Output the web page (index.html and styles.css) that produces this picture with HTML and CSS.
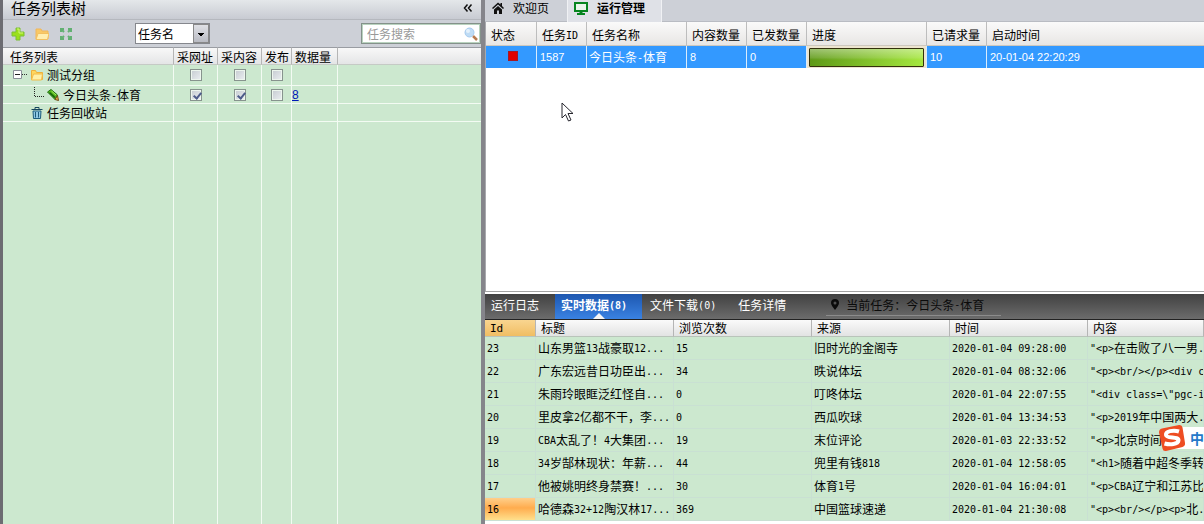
FILE: index.html
```html
<!DOCTYPE html>
<html lang="zh-CN">
<head>
<meta charset="utf-8">
<title>任务列表树</title>
<link rel="stylesheet" href="styles.css">
</head>
<body>
<div class="app">
  <aside class="sidebar">
    <header class="panel-title">
      <h1>任务列表树</h1>
      <button class="collapse" aria-label="收起">
        <svg width="10" height="8" viewBox="0 0 10 8"><path d="M4.500 0.500 1.500 4l3 3.500M8.500 0.500 5.500 4l3 3.500" fill="none" stroke="#111" stroke-width="1.500"/></svg>
      </button>
    </header>
    <div class="toolbar">
      <button aria-label="新建任务"><svg width="14" height="14" viewBox="0 0 14 14"><path d="M5 1h4v4h4v4H9v4H5V9H1V5h4z" fill="#9be01c" stroke="#7cc035"/><path d="M6 2h2v4h4" fill="none" stroke="#d5f77a"/></svg></button>
      <button aria-label="新建分组"><svg width="14" height="14" viewBox="0 0 14 14"><path d="M1 12V2h5l1 2h6v8z" fill="#f9c866" stroke="#f0b75a"/><path d="M1 12.500 3 6.500h11l-1.500 6z" fill="#ffeeb0" stroke="#f3c060"/></svg></button>
      <button aria-label="展开全部"><svg width="14" height="14" viewBox="0 0 14 14"><path d="M2 5V2h3M9 2h3v3M12 9v3H9M5 12H2V9M2 2l3 3M12 2 9 5M12 12 9 9M2 12l3-3" fill="none" stroke="#62b072" stroke-width="2"/></svg></button>
      <select class="field" aria-label="搜索字段"><option>任务名</option></select>
      <label class="search"><input type="text" placeholder="任务搜索" aria-label="任务搜索">
        <svg width="14" height="14" viewBox="0 0 14 14"><path d="m9 9 4 4" stroke="#b77a50" stroke-width="2.500"/><circle cx="5.500" cy="5.500" r="4.500" fill="#bfdcf5" stroke="#a5caee"/><circle cx="4" cy="4" r="2" fill="#e4f1fc"/></svg>
      </label>
    </div>
    <table class="tree">
      <colgroup><col class="w-name"><col class="w-check"><col class="w-check"><col class="w-pub"><col class="w-count"><col></colgroup>
      <thead><tr><th>任务列表</th><th>采网址</th><th>采内容</th><th>发布</th><th>数据量</th><th></th></tr></thead>
      <tbody>
        <tr class="group">
          <td><div class="node"><svg width="20" height="14" viewBox="0 0 20 14"><path d="M3.500 2.500h8v8h-8z" fill="#fff" stroke="#8a8f98"/><path d="M5 6.500h5" stroke="#222"/><path d="M12 6.500h6" stroke="#333" stroke-dasharray="1 1"/></svg><svg class="ico" width="12" height="12" viewBox="0 0 12 12"><path d="M.5 10.500v-9h4l1 2h6v7z" fill="#ffd75e" stroke="#eeb03c"/><path d="m.5 11 2-6h9l-1 6z" fill="#fff0a8" stroke="#f2bb48"/></svg><span>测试分组</span></div></td>
          <td class="mid"><input type="checkbox" aria-label="测试分组 采网址"></td><td class="mid"><input type="checkbox" aria-label="测试分组 采内容"></td><td class="mid"><input type="checkbox" aria-label="测试分组 发布"></td><td></td><td></td>
        </tr>
        <tr>
          <td><div class="node"><svg width="36" height="16" viewBox="0 0 36 16"><path d="M24.500 0v9M25 9.500h10" fill="none" stroke="#222" stroke-dasharray="1 1"/></svg><svg class="ico" width="12" height="12" viewBox="0 0 12 12"><path d="M.5 3 4 .5 10.500 6 8 10.500z" fill="#55b81c" stroke="#1f7010"/><path d="m2.500 3.500 5.500 5" stroke="#15600a" stroke-width="1.500"/><path d="m4.500 2 4.500 4" stroke="#a5e860"/><path d="m10.500 6.500 1 5-3.500-1z" fill="#f4b44c" stroke="#6b4617"/></svg><span>今日头条<i>-</i>体育</span></div></td>
          <td class="mid"><input type="checkbox" checked aria-label="今日头条 采网址"></td><td class="mid"><input type="checkbox" checked aria-label="今日头条 采内容"></td><td class="mid"><input type="checkbox" aria-label="今日头条 发布"></td><td class="num"><a href="#data">8</a></td><td></td>
        </tr>
        <tr>
          <td><div class="node"><svg width="20" height="14"></svg><svg class="ico" width="12" height="12" viewBox="0 0 12 12"><path d="M.5 2.500h11M4 2V.5h4V2" fill="none" stroke="#16465e"/><path d="M2 4h8l-.5 7.500h-7z" fill="#8fc9e4" stroke="#1c5c7c"/><path d="M4.500 5v5.500M7.500 5v5.500" stroke="#1c5c7c"/></svg><span>任务回收站</span></div></td>
          <td></td><td></td><td></td><td></td><td></td>
        </tr>
        <tr class="rest"><td></td><td></td><td></td><td></td><td></td><td></td></tr>
      </tbody>
    </table>
  </aside>

  <main class="main">
    <nav class="tabs">
      <button class="tab"><svg width="12" height="12" viewBox="0 0 12 12"><path d="M6 .5 0 6l1 1 5-4.500L11 7l1-1-2-2V1H8.500v1.500z" fill="#111"/><path d="M2 7.500 6 4l4 3.500V12H7V8.500H5V12H2z" fill="#111"/></svg>欢迎页</button>
      <button class="tab current"><svg width="14" height="13" viewBox="0 0 14 13"><path d="M1 1h12v8H1z" fill="#eaf5ea" stroke="#07851f" stroke-width="2"/><path d="M5.500 9h3v2H11v2H3v-2h2.500z" fill="#07851f"/></svg>运行管理</button>
    </nav>
    <section class="runs">
      <table class="run-table">
        <colgroup><col class="r1"><col class="r2"><col class="r3"><col class="r4"><col class="r4"><col class="r5"><col class="r4"><col></colgroup>
        <thead><tr><th>状态</th><th>任务<i>ID</i></th><th>任务名称</th><th>内容数量</th><th>已发数量</th><th>进度</th><th>已请求量</th><th>启动时间</th></tr></thead>
        <tbody><tr><td class="state"><span class="stopped"></span></td><td>1587</td><td class="cjk">今日头条<i>-</i>体育</td><td>8</td><td>0</td><td class="progress"><div class="bar"></div></td><td>10</td><td>20-01-04 22:20:29</td></tr></tbody>
      </table>
    </section>
    <section class="detail">
      <nav class="detail-tabs">
        <button>运行日志</button>
        <button class="current">实时数据<i>(8)</i></button>
        <button>文件下载<i>(0)</i></button>
        <button>任务详情</button>
        <p class="now"><svg width="8" height="11" viewBox="0 0 8 11"><path fill-rule="evenodd" d="M4 0a4 4 0 0 1 4 4c0 2-2 4-4 7C2 8 0 6 0 4a4 4 0 0 1 4-4zm0 2.500a1.500 1.500 0 1 0 0 3 1.500 1.500 0 0 0 0-3z" fill="#0b0b0b"/></svg>当前任务：今日头条<i>-</i>体育</p>
      </nav>
      <table class="data" id="data">
        <colgroup><col class="d1"><col class="d2"><col class="d2"><col class="d2"><col class="d2"><col></colgroup>
        <thead><tr><th class="sorted"><i>Id</i></th><th>标题</th><th>浏览次数</th><th>来源</th><th>时间</th><th>内容</th></tr></thead>
        <tbody>
          <tr><td><i>23</i></td><td>山东男篮<i>13</i>战豪取<i>12...</i></td><td><i>15</i></td><td>旧时光的金阁寺</td><td><i>2020-01-04 09:28:00</i></td><td><i>"&lt;p&gt;</i>在击败了八一男<i>.</i></td></tr>
          <tr><td><i>22</i></td><td>广东宏远昔日功臣出<i>...</i></td><td><i>34</i></td><td>昳说体坛</td><td><i>2020-01-04 08:32:06</i></td><td><i>"&lt;p&gt;&lt;br/&gt;&lt;/p&gt;&lt;div c</i></td></tr>
          <tr><td><i>21</i></td><td>朱雨玲眼眶泛红怪自<i>...</i></td><td><i>0</i></td><td>叮咚体坛</td><td><i>2020-01-04 22:07:55</i></td><td><i>"&lt;div class=\"pgc-i</i></td></tr>
          <tr><td><i>20</i></td><td>里皮拿<i>2</i>亿都不干，李<i>...</i></td><td><i>0</i></td><td>西瓜吹球</td><td><i>2020-01-04 13:34:53</i></td><td><i>"&lt;p&gt;2019</i>年中国两大<i>.</i></td></tr>
          <tr><td><i>19</i></td><td><i>CBA</i>太乱了！<i>4</i>大集团<i>...</i></td><td><i>19</i></td><td>末位评论</td><td><i>2020-01-03 22:33:52</i></td><td><i>"&lt;p&gt;</i>北京时间</td></tr>
          <tr><td><i>18</i></td><td><i>34</i>岁郜林现状：年薪<i>...</i></td><td><i>44</i></td><td>兜里有钱<i>818</i></td><td><i>2020-01-04 12:58:05</i></td><td><i>"&lt;h1&gt;</i>随着中超冬季转</td></tr>
          <tr><td><i>17</i></td><td>他被姚明终身禁赛！<i>...</i></td><td><i>30</i></td><td>体育<i>1</i>号</td><td><i>2020-01-04 16:04:01</i></td><td><i>"&lt;p&gt;CBA</i>辽宁和江苏比</td></tr>
          <tr><td class="active"><i>16</i></td><td>哈德森<i>32+12</i>陶汉林<i>17...</i></td><td><i>369</i></td><td>中国篮球速递</td><td><i>2020-01-04 21:30:08</i></td><td><i>"&lt;p&gt;&lt;br/&gt;&lt;/p&gt;&lt;p&gt;</i>北<i>.</i></td></tr>
        </tbody>
      </table>
    </section>
  </main>
</div>
<svg class="pointer" width="14" height="21" viewBox="0 0 14 21"><path d="M1 1v15l3.500-3.500L7.500 19l2.500-1-3-6.500h5z" fill="#fff" stroke="#26262e"/></svg>
<div class="ime"><svg width="26" height="28" viewBox="0 0 26 28"><path d="M3 4.500 20 1q3-.5 3.500 2.500L26 19q.5 3-2.500 4L7 27q-3 .5-3.500-2.500L0 8.500Q0 5 3 4.500z" fill="#ee4d22"/><path d="M20 7.500C14 5.500 6.500 7.500 7 11c.5 4 13 1 12.500 5.500C19 20.500 11 21 5.500 19.500" fill="none" stroke="#fff" stroke-width="4"/></svg><span>中</span></div>
</body>
</html>
```

FILE: styles.css
```css
* { box-sizing: border-box; }
body { margin: 0; overflow: hidden; background: #fff; color: #000; font: 12px/16px "Noto Sans CJK SC", sans-serif; }
i { font: 10px/12px "DejaVu Sans Mono", monospace; vertical-align: 1px; }
button { padding: 0; border: 0; background: none; color: inherit; font: inherit; }
button svg { display: block; }
table { width: 100%; border-collapse: separate; border-spacing: 0; table-layout: fixed; }
th, td { padding: 0; overflow: hidden; white-space: nowrap; text-align: left; font-weight: normal; }

.app { display: grid; grid-template-columns: 485px minmax(0, 1fr); height: 100vh; }
.sidebar { display: flex; flex-direction: column; min-height: 0; border-left: 3px solid #6c6c72; border-right: 4px solid #85858b; background: #cdd0d7; }
.panel-title { display: flex; justify-content: space-between; align-items: center; height: 20px; padding: 0 8px 4px; border-bottom: 1px solid #b5b8be; background: linear-gradient(#e4e7ea, #c8cbd2); }
.panel-title h1 { margin: 0; font-size: 15px; line-height: 15px; font-weight: normal; }
.toolbar { display: flex; align-items: center; gap: 10px; height: 27px; padding-left: 8px; }
.field { appearance: none; width: 75px; height: 21px; margin-left: 52px; padding: 0 2px; border: 1px solid #85878d; border-radius: 0; color: #000; font: inherit;
  background:
    linear-gradient(#000, #000) 62px 9px / 6px 1px no-repeat,
    linear-gradient(#000, #000) 63px 10px / 4px 1px no-repeat,
    linear-gradient(#000, #000) 64px 11px / 2px 1px no-repeat,
    linear-gradient(#dfe0e5, #b9bbc3) 58px 1px / 14px 17px no-repeat,
    linear-gradient(#888, #888) 57px 0 / 16px 19px no-repeat, #fff; }
.search { display: flex; align-items: center; width: 120px; height: 21px; margin-left: auto; padding: 0 2px; border: 1px solid #84918a; outline: 1px solid #b9d3bf; outline-offset: -2px; background: #fff; }
.search input { flex: 1; min-width: 0; padding: 0 0 0 3px; border: 0; outline: 0; background: none; font: inherit; }
.search input::placeholder { color: #999; }

.tree { flex: 1; min-height: 0; background: #cce8cf; }
.w-name { width: 171px; } .w-check { width: 44px; } .w-pub { width: 30px; } .w-count { width: 46px; }
.tree th { height: 18px; padding-left: 3px; border-right: 1px solid #b5b5b5; border-top: 1px solid #999ca2; border-bottom: 1px solid #c5cac5; background: linear-gradient(#f8f8f8, #e4e5e6); line-height: 15px; }
.tree th:first-child { padding-left: 7px; }
.tree th:last-child { border-right: 0; }
.tree td { height: 18px; border-right: 1px solid #f3fbf3; border-bottom: 1px solid #f3fbf3; }
.tree td:last-child { border-right: 0; }
.tree .group td { height: 21px; }
.tree .rest td { height: auto; border-bottom: 0; }
.tree .mid { text-align: center; line-height: 12px; }
.node { display: flex; align-items: center; height: 16px; padding-left: 7px; }
.node .ico { margin: 0 4px 0 1px; }
.num { font: 12px/16px "Liberation Sans", sans-serif; }
.num a { color: #0018b8; }
input[type="checkbox"] { appearance: none; display: block; position: relative; width: 12px; height: 12px; margin: 0 auto; border: 1px solid #87938e; outline: 1px solid #edf6ee; outline-offset: -2px; background: linear-gradient(135deg, #c5cbd0, #eceff2); }
input[type="checkbox"]:checked::after { content: ""; position: absolute; left: 4px; top: 1px; width: 3px; height: 6px; border: solid #4d5c8a; border-width: 0 2px 2px 0; transform: rotate(40deg); }

.main { display: flex; flex-direction: column; min-width: 0; }
.tabs { display: flex; height: 22px; background: #cdd0d7; border-bottom: 1px solid #b9bcc3; }
.tab { display: flex; align-items: center; gap: 9px; width: 82px; height: 16px; padding-left: 7px; }
.tab.current { width: 95px; height: 22px; padding: 0 0 6px 6px; border: solid #f0f1f4; border-width: 0 1px; background: #dfe1e7; font-weight: bold; }
.runs { flex: 1; min-height: 0; border-bottom: 1px solid #a3a3a3; border-left: 1px solid #a8a9ad; background: #fff; }
.r1 { width: 51px; } .r2 { width: 50px; } .r3 { width: 100px; } .r4 { width: 60px; } .r5 { width: 120px; }
.run-table th { height: 24px; padding: 2px 0 0 5px; border-right: 1px solid #bdbdbd; border-bottom: 1px solid #cdc8bf; background: linear-gradient(#fafafa, #e8e6e4); }
.run-table td { height: 22px; padding-left: 3px; border-right: 1px solid #d9ebfc; background: #3399ff; color: #fff; font: 11px/16px "Liberation Sans", sans-serif; }
.run-table tr > :last-child { border-right: 0; }
.run-table .cjk { padding-left: 2px; font: 12px/16px "Noto Sans CJK SC", sans-serif; }
.run-table .state { text-align: center; }
.stopped { display: inline-block; width: 10px; height: 10px; border: 1px solid #a31a26; background: #e00000; }
.run-table .progress { padding: 0 2px; background: #ede4cf; }
.bar { height: 19px; border: 1px solid #33300c; border-radius: 1px; background: linear-gradient(rgba(255,255,255,.4), rgba(255,255,255,.15) 50%, transparent 65%), linear-gradient(100deg, #5c9714, #a6e83e); }

.detail { margin-top: 2px; padding-bottom: 3px; }
.detail-tabs { display: flex; height: 26px; background: linear-gradient(#414141, #6c6c6c); border-bottom: 1px solid #222; color: #fff; }
.detail-tabs button { padding: 0 6px 3px; }
.detail-tabs .current { position: relative; margin: 0 2px 0 10px; padding: 0 15px 3px 6px; background: linear-gradient(#1d57b0, #3a82e2); font-weight: bold; }
.detail-tabs .current i { font-weight: bold; }
.detail-tabs .current::after { content: ""; position: absolute; left: 50%; bottom: 0; margin-left: -6px; border: 6px solid transparent; border-top: 0; border-bottom-color: #f5f5f5; }
.detail-tabs button:nth-of-type(4) { margin-left: 10px; }
.detail-tabs .now { display: flex; align-items: center; height: 22px; margin: 0 0 0 34px; padding: 0 17px 0 5px; border-bottom: 1px solid #8c8c8c; color: #0b0b0b; }
.now svg { margin-right: 7px; }
.d1 { width: 51px; } .d2 { width: 138px; }
.data { background: #cce8cf; }
.data th { height: 17px; padding-left: 5px; border-right: 1px solid #b5b5b5; border-bottom: 1px solid #b9c4ba; background: linear-gradient(#fafafa, #e2e3e3); line-height: 16px; }
.data .sorted { background: linear-gradient(#f9d590, #f0bd63); }
.data th i { font-size: 11px; }
.data td { height: 23px; padding-left: 2px; border-right: 1px solid #c9e0d3; border-bottom: 1px solid #c9e0d3; }
.data .active { background: linear-gradient(#ffcf8b, #ffac4e 45%, #ffe08c); }

.pointer { position: absolute; left: 561px; top: 102px; }
.ime { position: absolute; right: 0; top: 424px; display: flex; align-items: center; width: 45px; height: 28px; overflow: hidden; background: linear-gradient(#fff, #fff) 12px 3px / 33px 22px no-repeat; color: #2579c9; font-size: 14px; font-weight: bold; white-space: nowrap; }
.ime svg { flex: none; margin-right: 5px; }
```
